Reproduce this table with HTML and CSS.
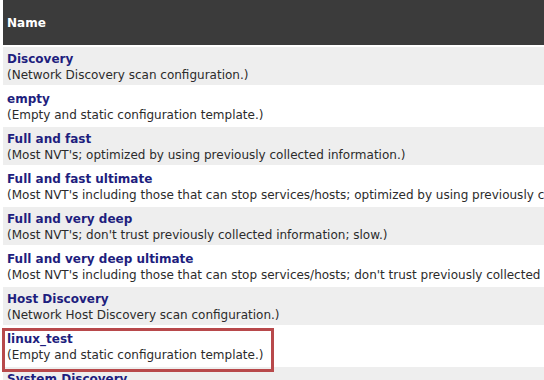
FILE: index.html
```html
<!DOCTYPE html>
<html lang="en">
<head>
	<meta charset="UTF-8">
	<title>Scan Configs</title>
	<link rel="stylesheet" href="styles.css">
</head>
<body>
	<table class="configs">
		<thead>
			<tr><th>Name</th></tr>
		</thead>
		<tbody>
			<tr class="odd"><td><a href="">Discovery</a><p>(Network Discovery scan configuration.)</p></td></tr>
			<tr><td><a href="">empty</a><p>(Empty and static configuration template.)</p></td></tr>
			<tr class="odd"><td><a href="">Full and fast</a><p>(Most NVT's; optimized by using previously collected information.)</p></td></tr>
			<tr><td><a href="">Full and fast ultimate</a><p>(Most NVT's including those that can stop services/hosts; optimized by using previously collected information.)</p></td></tr>
			<tr class="odd"><td><a href="">Full and very deep</a><p>(Most NVT's; don't trust previously collected information; slow.)</p></td></tr>
			<tr><td><a href="">Full and very deep ultimate</a><p>(Most NVT's including those that can stop services/hosts; don't trust previously collected information; slow.)</p></td></tr>
			<tr class="odd"><td><a href="">Host Discovery</a><p>(Network Host Discovery scan configuration.)</p></td></tr>
			<tr><td class="marked"><a href="">linux_test</a><p>(Empty and static configuration template.)</p><span class="mark"></span></td></tr>
			<tr class="odd"><td><a href="">System Discovery</a><p>(Network System Discovery scan configuration.)</p></td></tr>
		</tbody>
	</table>
</body>
</html>
```

FILE: styles.css
```css
html,body{margin:0;padding:0;overflow:hidden;background:#fff;}
body{font-family:"DejaVu Sans",sans-serif;font-size:12px;line-height:16px;color:#2b2b2b;}
p{margin:0;padding:0;white-space:nowrap;}
.configs{border-collapse:separate;border-spacing:0 2px;margin:-2px 0 0 3px;width:760px;}
.configs th{height:44px;padding:1px 4px 0;text-align:left;background-color:#3b3b3b;color:#fff;font-weight:bold;}
.configs td{height:38px;padding:4px 4px 2px;box-sizing:border-box;background-color:#fff;vertical-align:top;}
.configs tr.odd td{background-color:#eeeeee;}
.configs a{color:#1e1e7e;font-weight:bold;text-decoration:none;white-space:nowrap;}
.marked{position:relative;}
/* red frame drawn round the linux_test entry */
.mark{position:absolute;left:-1px;top:1px;width:272px;height:44px;box-sizing:border-box;border:3px solid #b8494b;}
```
